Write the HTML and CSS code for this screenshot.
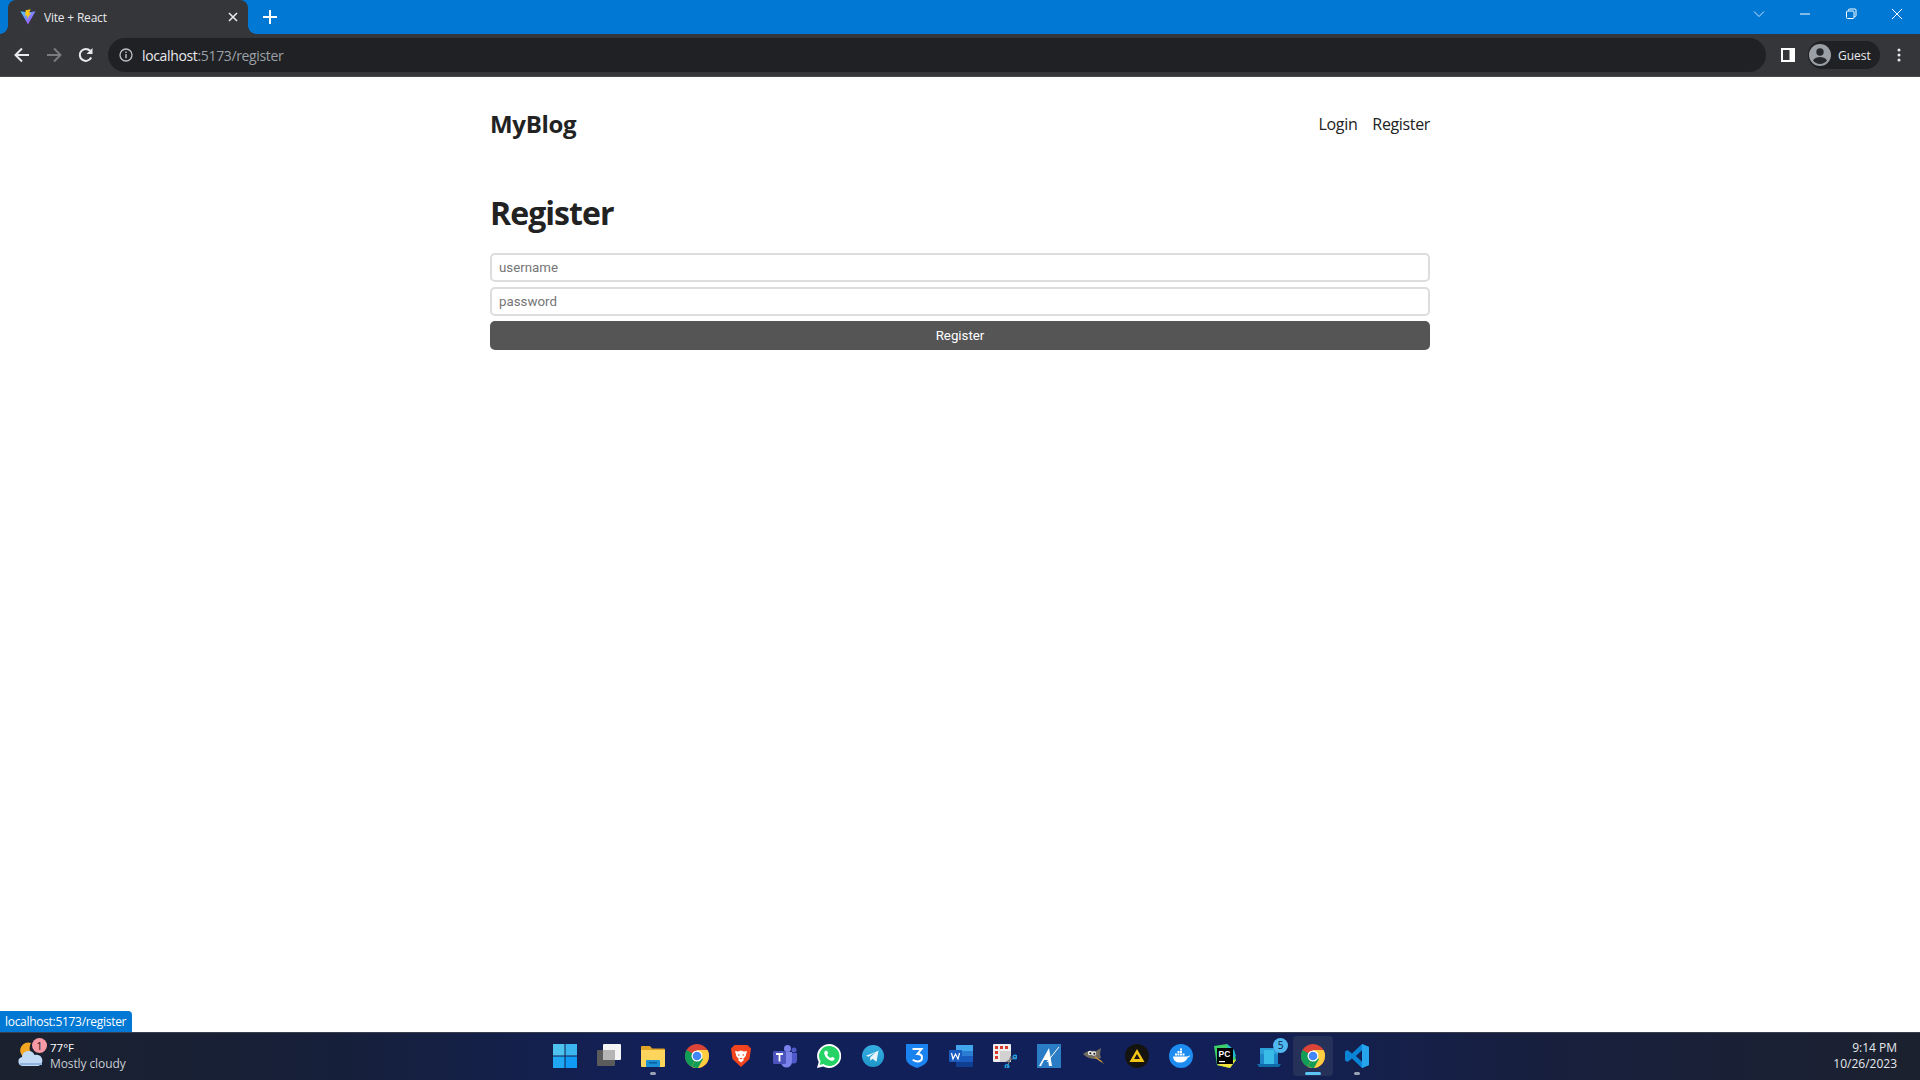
FILE: index.html
```html
<!DOCTYPE html>
<html lang="en">
<head>
<meta charset="utf-8">
<title>Vite + React</title>
<link rel="stylesheet" href="styles.css">
</head>
<body>
<div class="tabstrip">
  <div class="tab">
    <svg class="tab-icon" width="16" height="16" viewBox="0 0 18 18"><defs><linearGradient id="vg" x1="0" y1="0" x2="1" y2="1"><stop offset="0" stop-color="#41d1ff"/><stop offset="1" stop-color="#bd34fe"/></linearGradient></defs><path d="M0.500 2.500l8.500 1.400 8.500-1.400L9 17.500z" fill="url(#vg)"/><path d="M12 0.300L6.300 1.400l-.3 6.300 2.200-.4-.4 4 4.700-6.800-2.400.4z" fill="#ffc517"/></svg>
    <span class="tab-title">Vite + React</span>
    <svg class="tab-close" width="10" height="10" viewBox="0 0 10 10"><path d="M1 1l8 8M9 1l-8 8" stroke="#e8eaed" stroke-width="1.600"/></svg>
  </div>
  <svg class="newtab" width="14" height="14" viewBox="0 0 14 14"><path d="M7 0v14M0 7h14" stroke="#fff" stroke-width="2"/></svg>
  <div class="win-controls">
    <svg width="12" height="12" viewBox="0 0 12 12"><path d="M1 3.500l5 5 5-5" fill="none" stroke="#cfe4f7" stroke-width="1"/></svg>
    <svg width="12" height="12" viewBox="0 0 12 12"><path d="M1 6h10" stroke="#fff" stroke-width="1"/></svg>
    <svg width="12" height="12" viewBox="0 0 12 12"><path d="M3.500 2.500V2a1 1 0 0 1 1-1H10a1 1 0 0 1 1 1v5.500a1 1 0 0 1-1 1h-.5" fill="none" stroke="#fff"/><rect x="1.500" y="3" width="7.500" height="7.500" rx="1" fill="none" stroke="#fff"/></svg>
    <svg width="12" height="12" viewBox="0 0 12 12"><path d="M1 1l10 10M11 1L1 11" stroke="#fff" stroke-width="1"/></svg>
  </div>
</div>
<div class="toolbar">
  <svg class="nav" width="16" height="16" viewBox="0 0 16 16"><path d="M15 8H2M8 1.500L1.500 8 8 14.500" fill="none" stroke="#e8eaed" stroke-width="2"/></svg>
  <svg class="nav" width="16" height="16" viewBox="0 0 16 16"><path d="M1 8h13M8 1.500L14.500 8 8 14.500" fill="none" stroke="#7a7c80" stroke-width="2"/></svg>
  <svg class="nav" width="16" height="16" viewBox="0 0 16 16"><path d="M13.200 10.500A6 6 0 1 1 12.200 3.800" fill="none" stroke="#e8eaed" stroke-width="2"/><path d="M14.500 1v6h-6z" fill="#e8eaed"/></svg>
  <div class="omnibox">
    <svg width="14" height="14" viewBox="0 0 14 14"><circle cx="7" cy="7" r="6" fill="none" stroke="#bdc1c6" stroke-width="1.300"/><path d="M7 6v4.200M7 3.400v1.500" stroke="#bdc1c6" stroke-width="1.400"/></svg>
    <span class="url"><span class="url-host">localhost</span>:5173/register</span>
  </div>
  <svg class="sidepanel" width="14" height="14" viewBox="0 0 14 14"><path fill-rule="evenodd" d="M0 0h14v14H0zM2 2v10h6.500V2z" fill="#fff"/></svg>
  <div class="profile">
    <svg width="22" height="22" viewBox="0 0 22 22"><circle cx="11" cy="11" r="11" fill="#9aa0a6"/><circle cx="11" cy="8" r="3.700" fill="#28292c"/><path d="M4 16.500c1.500-2.800 4.500-3.500 7-3.500s5.500.7 7 3.500A9 9 0 0 1 11 20a9 9 0 0 1-7-3.500z" fill="#28292c"/></svg>
    <span>Guest</span>
  </div>
  <svg class="menu" width="4" height="14" viewBox="0 0 4 14"><circle cx="2" cy="2" r="1.500" fill="#e8eaed"/><circle cx="2" cy="7" r="1.500" fill="#e8eaed"/><circle cx="2" cy="12" r="1.500" fill="#e8eaed"/></svg>
</div>

<div class="page">
  <main class="container">
    <header class="site-header">
      <a class="logo">MyBlog</a>
      <nav class="site-nav"><a>Login</a><a>Register</a></nav>
    </header>
    <h1 class="title">Register</h1>
    <form class="form">
      <input class="field" type="text" placeholder="username">
      <input class="field" type="password" placeholder="password">
      <button class="submit" type="button">Register</button>
    </form>
  </main>
</div>

<div class="status-bubble">localhost:5173/register</div>

<footer class="taskbar">
  <div class="weather">
    <div class="weather-icon">
      <svg width="30" height="30" viewBox="0 0 30 30"><path d="M15 2a8 8 0 1 0 3 13A9.500 9.500 0 0 1 15 2z" fill="#f5a623"/><path d="M7 25a4.500 4.500 0 0 1-1-8.900A6.500 6.500 0 0 1 18.500 14a5.600 5.600 0 0 1 4 11z" fill="#c2daf3"/><path d="M4 23h22" stroke="#8fb4dd" stroke-width="2"/></svg>
      <span class="weather-badge">1</span>
    </div>
    <div class="weather-text"><span class="temp">77°F</span><span class="cond">Mostly cloudy</span></div>
  </div>
  <div class="tb-icons">
    <div class="tb"><svg width="24" height="24" viewBox="0 0 24 24"><path d="M0 0h11.500v11.500H0z" fill="#4fc3f0"/><path d="M12.500 0H24v11.500H12.500z" fill="#3bb5f0"/><path d="M0 12.500h11.500V24H0z" fill="#1fa7f2"/><path d="M12.500 12.500H24V24H12.500z" fill="#0f9af5"/></svg></div>
    <div class="tb"><svg width="24" height="24" viewBox="0 0 24 24"><rect x="6" y="0" width="18" height="16" rx="1" fill="#f4f4f4"/><rect x="0" y="6" width="18" height="16" rx="1" fill="#5b5b5b"/><rect x="6" y="6" width="12" height="10" fill="#b5b5b5"/></svg></div>
    <div class="tb is-open"><svg width="24" height="24" viewBox="0 0 24 24"><path d="M0 3a1 1 0 0 1 1-1h8l2 2.500h12a1 1 0 0 1 1 1V8H0z" fill="#e0a526"/><path d="M0 6h24v16a1 1 0 0 1-1 1H1a1 1 0 0 1-1-1z" fill="#fdd55d"/><rect x="5" y="16" width="14" height="7" rx="1" fill="#1b8fd6"/><rect x="8" y="18" width="8" height="1.500" fill="#0c5f9c"/></svg></div>
    <div class="tb"><svg width="24" height="24" viewBox="0 0 24 24"><use href="#chrome"/></svg></div>
    <div class="tb"><svg width="24" height="24" viewBox="0 0 24 24"><path d="M5.500 1h13L22 4.500 20.500 15 12 23 3.500 15 2 4.500z" fill="#f1441f"/><path d="M6 7l3 .5L12 6.500l3 1 3-.5-1.500 5.500L14 15l1 1-3 2.500L9 16l1-1-2.500-2.500z" fill="#fff"/><path d="M9 10l2 1-1.500 1zM15 10l-2 1 1.500 1zM10.500 14h3L12 15.500z" fill="#f1441f"/></svg></div>
    <div class="tb"><svg width="24" height="24" viewBox="0 0 24 24"><circle cx="14.500" cy="4.500" r="3.500" fill="#7b83eb"/><circle cx="21" cy="6" r="2.500" fill="#5059c9"/><path d="M17 9h7v7a3.500 3.500 0 0 1-7 0z" fill="#5059c9"/><path d="M8 8h11v10a5 5 0 0 1-11 0z" fill="#7b83eb"/><rect x="0" y="7" width="13" height="13" rx="1.500" fill="#4b53bc"/><path d="M3 10h7M6.500 10v7.500" stroke="#fff" stroke-width="1.800"/></svg></div>
    <div class="tb"><svg width="24" height="24" viewBox="0 0 24 24"><path d="M12 0a12 12 0 0 0-10.300 18L0 24l6.200-1.600A12 12 0 1 0 12 0z" fill="#fff"/><path d="M12 2a10 10 0 0 0-8.400 15.300L2.700 21l3.800-1A10 10 0 1 0 12 2z" fill="#25d366"/><path d="M8.500 6.800c-1 .5-1.700 2-1 3.800 1 2.800 3.200 5 6 6 1.800.6 3.200 0 3.800-1.200l.3-1.400-2.600-1.300-1.200 1.400c-1.500-.6-3-2-3.700-3.600l1.200-1.200-1.200-2.600z" fill="#fff"/></svg></div>
    <div class="tb"><svg width="24" height="24" viewBox="0 0 24 24"><defs><linearGradient id="tg" x1="0" y1="0" x2="0" y2="1"><stop offset="0" stop-color="#37aee2"/><stop offset="1" stop-color="#1e96c8"/></linearGradient></defs><circle cx="12" cy="12" r="11" fill="url(#tg)"/><path d="M5 11.800l12.500-5-2 11-4-3-2 2-.5-3.300 6-5.500-7.500 4.800z" fill="#e8f4fa"/></svg></div>
    <div class="tb"><svg width="24" height="24" viewBox="0 0 24 24"><path d="M1 0h22v14c0 5-5 8-11 10C6 22 1 19 1 14z" fill="#1a83f0"/><path d="M7.500 5h9l-4 5c3 0 4.500 1.500 4.500 3.500 0 2.500-2 4-4.700 4-2 0-3.500-.7-4.500-1.800" fill="none" stroke="#fff" stroke-width="2"/></svg></div>
    <div class="tb"><svg width="24" height="24" viewBox="0 0 24 24"><rect x="7" y="1" width="17" height="22" rx="1" fill="#2b7cd3"/><rect x="7" y="1" width="17" height="6" fill="#41a5ee"/><rect x="7" y="12" width="17" height="6" fill="#185abd"/><rect x="7" y="18" width="17" height="5" fill="#103f91"/><rect x="0" y="6" width="13" height="12" rx="1" fill="#185abd"/><path d="M2.500 9l1.500 6 2.500-5 2.500 5 1.500-6" fill="none" stroke="#fff" stroke-width="1.200"/></svg></div>
    <div class="tb"><svg width="24" height="24" viewBox="0 0 24 24"><rect x="0" y="0" width="18" height="18" rx="1" fill="#eee"/><path d="M2 2h3v3H2zM7 2h3v3H7zM12 2h3v3h-3zM2 7h3v3H2zM2 12h3v3H2z" fill="#d83b2d"/><path d="M7 7h11v11H7z" fill="#d2d2d2"/><path d="M13 18l10-5M18 12l-4 12" stroke="#777" stroke-width="1.200"/><circle cx="22" cy="13" r="1.800" fill="none" stroke="#1a9fe8" stroke-width="1.400"/><circle cx="14" cy="22.500" r="1.800" fill="none" stroke="#1a9fe8" stroke-width="1.400"/></svg></div>
    <div class="tb"><svg width="24" height="24" viewBox="0 0 24 24"><rect width="24" height="24" fill="#2a7dc4"/><path d="M2 22L12 4l3 18h-3l-1-6H7l-3 6z" fill="#fff"/><path d="M10 18L22 3" stroke="#fff" stroke-width="1"/></svg></div>
    <div class="tb"><svg width="24" height="24" viewBox="0 0 24 24"><path d="M2 10c3-3 8-4 13-3l5-3-1 6 1 4-6 1c-4 0-8-1-12-5z" fill="#6f6b5f"/><circle cx="9" cy="9" r="2.200" fill="#eee"/><circle cx="13" cy="9.500" r="2.200" fill="#eee"/><circle cx="9.300" cy="9.200" r="1" fill="#111"/><circle cx="13.300" cy="9.700" r="1" fill="#111"/><path d="M14 13l7 5" stroke="#d49a3a" stroke-width="1.500"/><path d="M21 18l2 2" stroke="#444" stroke-width="1.500"/></svg></div>
    <div class="tb"><svg width="24" height="24" viewBox="0 0 24 24"><circle cx="12" cy="12" r="12" fill="#15130e"/><path d="M12 5l7.500 13h-15z" fill="#f6c51a"/><path d="M12 10l3 5H9z" fill="#15130e"/></svg></div>
    <div class="tb"><svg width="24" height="24" viewBox="0 0 24 24"><circle cx="12" cy="12" r="12" fill="#1d8cf0"/><path d="M4 12.500h14c1 0 1.800-.5 2.500-1 .3 0 .5 0 .5.300-.5 1-1.300 1.500-2.300 1.700-1 3-3.700 5-7.700 5-4 0-6.500-2-7-6z" fill="#fff"/><path d="M6 9.500h2v2H6zM8.500 9.500h2v2h-2zM11 9.500h2v2h-2zM8.500 7h2v2h-2zM11 7h2v2h-2zM11 4.500h2v2h-2zM13.500 9.500h2v2h-2z" fill="#fff"/></svg></div>
    <div class="tb"><svg width="24" height="24" viewBox="0 0 24 24"><path d="M1 2l13-2 7 6 2 10-6 8L4 21z" fill="#3ecf6a"/><path d="M14 0l7 6 2 6-6 3z" fill="#1fb6d4"/><path d="M4 21l13 3 6-8-8 1z" fill="#f5e33b"/><rect x="4" y="4" width="16" height="16" fill="#000"/><path d="M6 17h6v1.200H6z" fill="#fff"/><text x="5.500" y="13" font-family="Liberation Sans" font-weight="700" font-size="8.500" fill="#fff">PC</text></svg></div>
    <div class="tb"><svg width="24" height="24" viewBox="0 0 24 24"><path d="M3 4h18v16H3z" fill="#2b9fd8"/><path d="M3 10h18v10H3z" fill="#1d87c9"/><path d="M0 20h24l-2 3H2z" fill="#0f6aa8"/><path d="M7 6h10v14H7z" fill="#39bce8"/></svg><span class="tb-badge">5</span></div>
    <div class="tb is-active"><svg width="24" height="24" viewBox="0 0 24 24"><use href="#chrome"/></svg></div>
    <div class="tb is-open"><svg width="24" height="24" viewBox="0 0 24 24"><path d="M17 0l7 3v18l-7 3-10-9.500L2.500 18 0 16.500V7.500L2.500 6 7 9.500zm0 6.500L11 12l6 5.500z" fill="#0a84d6"/><path d="M17 0l7 3v18l-7 3z" fill="#26a5ed"/><path d="M17 6.500L11 12l6 5.500z" fill="#122058"/></svg></div>
  </div>
  <div class="clock"><span>9:14 PM</span><span>10/26/2023</span></div>
</footer>

<svg class="defs" width="0" height="0"><defs><symbol id="chrome" viewBox="0 0 24 24"><circle cx="12" cy="12" r="12" fill="#db4437"/><path d="M12 12L1.600 6a12 12 0 0 0 5 16.800z" fill="#0f9d58"/><path d="M12 12l-5.400 10.800A12 12 0 0 0 24 12a12 12 0 0 0-1.400-6H12z" fill="#ffcd40"/><path d="M12 12l-5.200 10.600a12 12 0 0 0 6.200 1.400l5-9z" fill="#0f9d58"/><circle cx="12" cy="12" r="5.500" fill="#fff"/><circle cx="12" cy="12" r="4.300" fill="#4285f4"/></symbol></defs></svg>
</body>
</html>
```
FILE: styles.css
```css
* { box-sizing: border-box; }
html, body { margin: 0; height: 100%; overflow: hidden; }
body {
  display: flex;
  flex-direction: column;
  height: 100vh;
  background: #fff;
  font-family: "Open Sans", "Liberation Sans", sans-serif;
  position: relative;
}
.tabstrip {
  height: 34px;
  background: #0078d4;
  display: flex;
  align-items: center;
  flex: none;
  padding-left: 8px;
}
.tab {
  position: relative;
  width: 240px;
  height: 34px;
  background: #35363a;
  border-radius: 8px 8px 0 0;
  display: flex;
  align-items: center;
  padding: 0 10px 0 12px;
  color: #e8eaed;
  font: 12px "Open Sans", sans-serif;
  letter-spacing: -0.2px;
}
.tab::before, .tab::after {
  content: "";
  position: absolute;
  bottom: 0;
  width: 8px;
  height: 8px;
}
.tab::before {
  left: -8px;
  background: radial-gradient(circle at 0 0, transparent 7.500px, #35363a 8px);
}
.tab::after {
  right: -8px;
  background: radial-gradient(circle at 100% 0, transparent 7.500px, #35363a 8px);
}
.tab-title { margin-left: 8px; flex: 1; }
.newtab { margin-left: 15px; }
.win-controls {
  margin-left: auto;
  display: flex;
  align-items: center;
  margin-right: 17px;
  gap: 34px;
  margin-top: -6px;
}
.toolbar {
  height: 43px;
  background: #35363a;
  border-bottom: 1px solid #4a4b4f;
  display: flex;
  align-items: center;
  flex: none;
  padding-left: 14px;
}
.nav { margin-right: 16px; flex: none; }
.omnibox {
  margin-left: -2px;
  width: 1658px;
  height: 34px;
  background: #202124;
  border-radius: 17px;
  display: flex;
  align-items: center;
  padding-left: 11px;
  flex: none;
}
.url {
  margin-left: 9px;
  color: #9aa0a6;
  font: 14px "Open Sans", sans-serif;
  letter-spacing: -0.35px;
}
.url-host { color: #e8eaed; }
.sidepanel { margin-left: 15px; flex: none; }
.profile {
  margin-left: 13px;
  width: 72px;
  height: 28px;
  border-radius: 14px;
  background: #202124;
  display: flex;
  align-items: center;
  gap: 7px;
  padding-left: 1px;
  color: #e8eaed;
  font: 12px "Open Sans", sans-serif;
  flex: none;
}
.menu { margin-left: 17px; flex: none; }

.page { flex: 1; min-height: 0; background: #fff; }
.container {
  width: 940px;
  margin: 0 auto;
  color: #222;
}
.site-header {
  display: flex;
  justify-content: space-between;
  align-items: center;
  padding-top: 28px;
  height: 64px;
  margin-bottom: 50px;
}
.logo { font-size: 24px; font-weight: 700; color: #222; line-height: 33px; letter-spacing: -0.3px; }
.site-nav { display: flex; gap: 15px; margin-top: 2px; font-size: 16px; letter-spacing: -0.35px; color: #222; }
.title {
  margin: 0 0 18px;
  font-size: 32px;
  line-height: 44px;
  font-weight: 700;
  letter-spacing: -0.95px;
  color: #222;
}
.form { display: flex; flex-direction: column; gap: 5px; }
.field {
  display: block;
  width: 100%;
  height: 29px;
  padding: 0 7px;
  border: 2px solid #ddd;
  border-radius: 5px;
  background: #fff;
  font: 13.300px Roboto, sans-serif;
  outline: none;
}
.field::placeholder { color: #757575; opacity: 1; }
.submit {
  display: block;
  width: 100%;
  height: 29px;
  padding: 0;
  border: 0;
  border-radius: 5px;
  background: #555;
  color: #fff;
  font: 13.300px Roboto, sans-serif;
}
.status-bubble {
  position: absolute;
  left: 0;
  bottom: 48px;
  height: 21px;
  padding: 0 6px 0 5px;
  background: #0078d4;
  color: #fff;
  border-radius: 0 4px 0 0;
  font: 12px/21px "Open Sans", sans-serif;
  letter-spacing: -0.3px;
}
.taskbar {
  height: 48px;
  flex: none;
  display: grid;
  grid-template-columns: 1fr auto 1fr;
  align-items: center;
  padding-bottom: 2px;
  background: linear-gradient(90deg, #1b212e 0%, #161f3a 18%, #12205a 35%, #12205a 62%, #171f3e 80%, #1b212e 100%);
  border-top: 1px solid #3a3f50;
  color: #fff;
  font: 12px "Open Sans", sans-serif;
}
.weather { display: flex; align-items: center; padding-left: 16px; gap: 6px; }
.weather-icon { position: relative; width: 28px; height: 30px; }
.weather-badge {
  position: absolute;
  right: -3px;
  top: -3px;
  width: 15px;
  height: 15px;
  border-radius: 50%;
  background: #f79aa5;
  color: #1b1b1b;
  font-size: 11px;
  line-height: 15px;
  text-align: center;
}
.weather-text { display: flex; flex-direction: column; line-height: 16px; }
.temp { color: #fff; font-size: 11.500px; }
.cond { color: #c9ccd2; font-size: 12px; letter-spacing: -0.1px; }
.tb-icons { display: flex; padding-left: 2px; }
.tb {
  position: relative;
  width: 44px;
  height: 40px;
  display: flex;
  align-items: center;
  justify-content: center;
}
.tb > svg { position: relative; }
.is-open::after {
  content: "";
  position: absolute;
  bottom: 1px;
  left: 19px;
  width: 6px;
  height: 3px;
  border-radius: 2px;
  background: #9aa3b5;
}
.is-active::before {
  content: "";
  position: absolute;
  inset: 0 2px;
  border-radius: 4px;
  background: #26315a;
}
.is-active::after {
  content: "";
  position: absolute;
  bottom: 1px;
  left: 14px;
  width: 16px;
  height: 3px;
  border-radius: 2px;
  background: #5cc5f5;
}
.tb-badge {
  position: absolute;
  top: 2px;
  right: 3px;
  width: 15px;
  height: 15px;
  border-radius: 50%;
  background: #4fb8ef;
  color: #0c1a40;
  font-size: 10px;
  line-height: 15px;
  text-align: center;
}
.clock {
  justify-self: end;
  display: flex;
  flex-direction: column;
  align-items: flex-end;
  padding-right: 23px;
  color: #e6e8ec;
  font-size: 12px;
  line-height: 16px;
}
.defs { position: absolute; }
```
